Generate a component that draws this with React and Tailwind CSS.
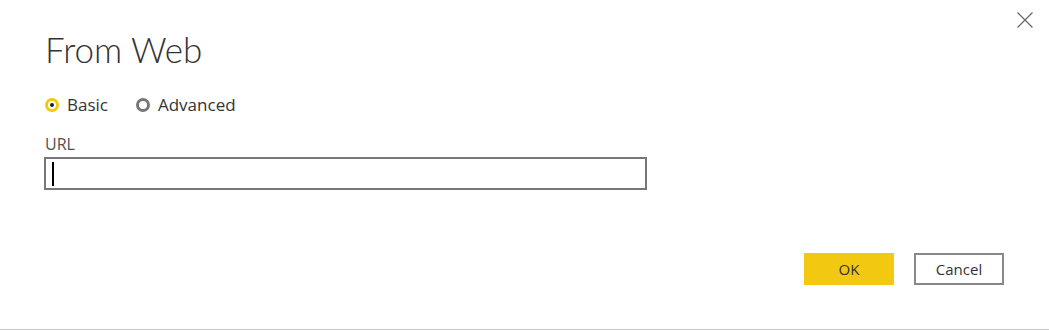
import React from 'react'

function Radio({ checked, label }) {
    return (
        <label className='flex items-center gap-[8px] cursor-pointer'>
            {checked ? (
                <span className='w-[14px] h-[14px] rounded-full border-[3px] border-[#f2c811] flex items-center justify-center'>
                    <span className='w-[4px] h-[4px] rounded-full bg-[#222]'></span>
                </span>
            ) : (
                <span className='w-[14px] h-[14px] rounded-full border-[3px] border-[#777]'></span>
            )}
            <span>{label}</span>
        </label>
    )
}

export default function App() {
    return (
        <div className='relative h-[330px] w-full bg-white border-b border-[#c8c8c8] text-[#333]' style={{ fontFamily: '"Open Sans", "Noto Sans", sans-serif' }}>
            <button className='absolute top-[12px] right-[16px] w-[16px] h-[16px]'>
                <svg width='16' height='16' viewBox='0 0 16 16' fill='none' stroke='#666' strokeWidth='1.2'>
                    <path d='M0.5 0.5 L15.5 15.5 M15.5 0.5 L0.5 15.5' />
                </svg>
            </button>

            <div className='pl-[45px] pr-[45px]'>
                <h1 className='pt-[28px] text-[35px] leading-[42px] font-light' style={{ fontFamily: 'Lato, "Open Sans", sans-serif' }}>From Web</h1>

                <div className='mt-[23px] flex items-center gap-[28px] text-[17px] leading-[24px]'>
                    <Radio checked label='Basic' />
                    <Radio label='Advanced' />
                </div>

                <div className='mt-[16px] text-[16px] leading-[22px] text-[#505050]'>URL</div>
                <div className='mt-[2px] -ml-[1px] w-[603px] h-[33px] border-2 border-[#777] flex items-center pl-[6px]'>
                    <span className='w-[2px] h-[24px] bg-black'></span>
                </div>

                <div className='mt-[63px] flex justify-end gap-[20px] text-[15px]'>
                    <button className='w-[90px] h-[32px] bg-[#f2c811] text-[#333]'>OK</button>
                    <button className='w-[90px] h-[32px] border-2 border-[#888] text-[#333]'>Cancel</button>
                </div>
            </div>
        </div>
    )
}
